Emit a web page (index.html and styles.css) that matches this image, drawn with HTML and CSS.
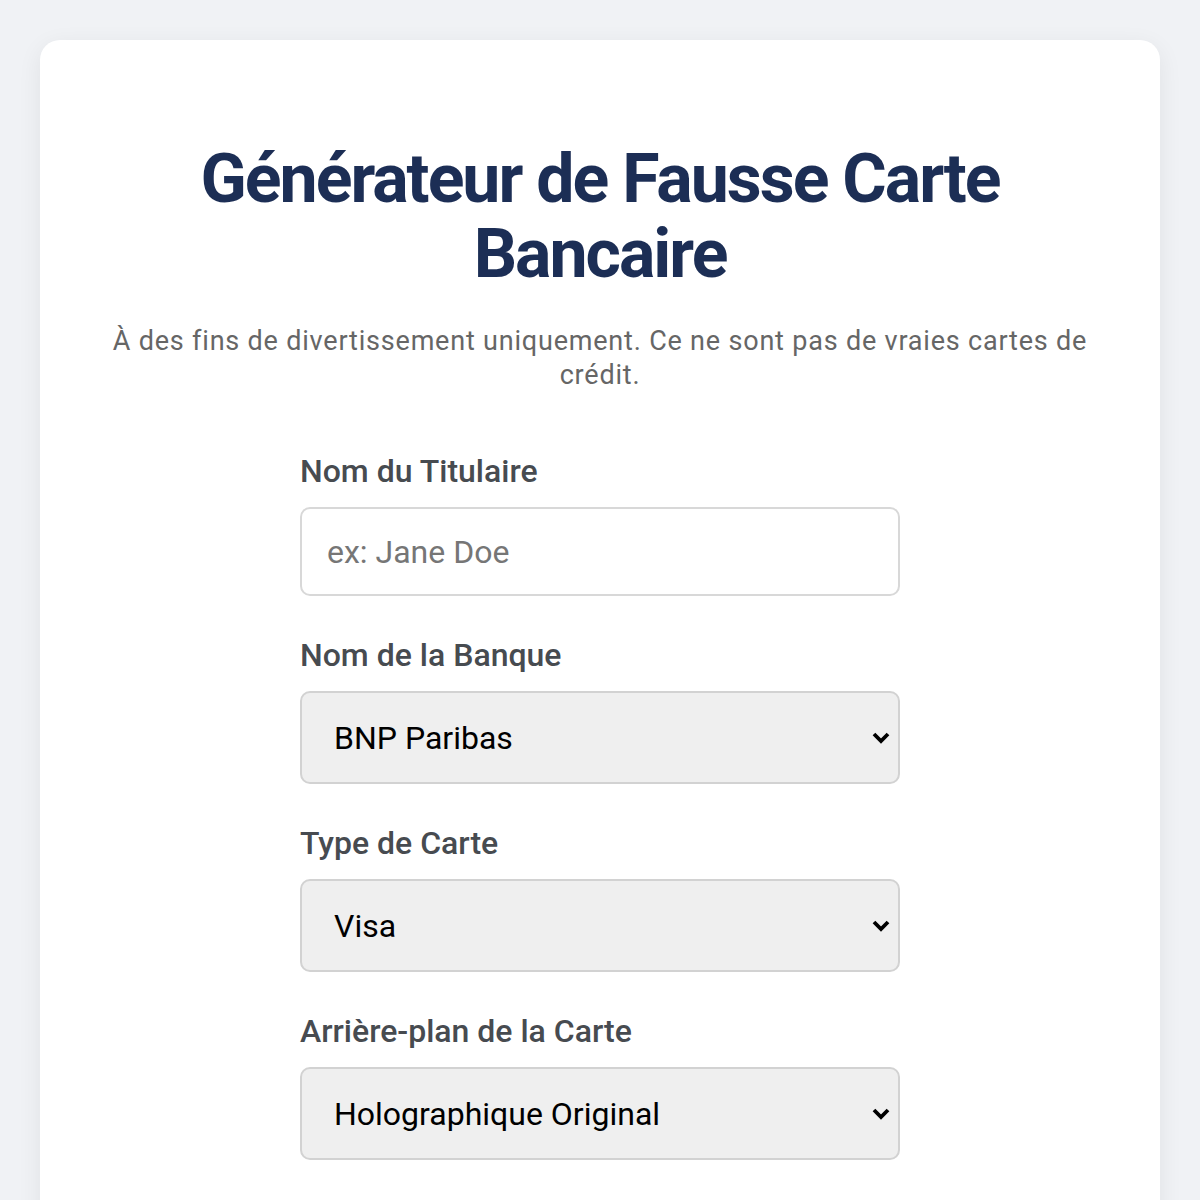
FILE: index.html
```html
<!DOCTYPE html>
<html lang="fr">
<head>
<meta charset="utf-8">
<title>Générateur de Fausse Carte Bancaire</title>
<link rel="stylesheet" href="styles.css">
</head>
<body>
<main class="card">
  <h1 class="title">Générateur de Fausse Carte Bancaire</h1>
  <p class="subtitle">À des fins de divertissement uniquement. Ce ne sont pas de vraies cartes de crédit.</p>
  <form class="form">
    <div class="field">
      <label class="label" for="holder">Nom du Titulaire</label>
      <input class="input" id="holder" type="text" placeholder="ex: Jane Doe">
    </div>
    <div class="field">
      <label class="label" for="bank">Nom de la Banque</label>
      <select class="select" id="bank">
        <option>BNP Paribas</option>
      </select>
    </div>
    <div class="field">
      <label class="label" for="type">Type de Carte</label>
      <select class="select" id="type">
        <option>Visa</option>
      </select>
    </div>
    <div class="field">
      <label class="label" for="bg">Arrière-plan de la Carte</label>
      <select class="select" id="bg">
        <option>Holographique Original</option>
      </select>
    </div>
  </form>
</main>
</body>
</html>
```

FILE: styles.css
```css
html, body {
  margin: 0;
  padding: 0;
}
body {
  background: #f0f2f5;
  font-family: Roboto, "Liberation Sans", sans-serif;
  padding: 40px 40px 0;
}
.card {
  background: #ffffff;
  border-radius: 20px;
  box-shadow: 0 6px 24px rgba(0, 0, 0, 0.07);
  padding: 102px 60px 60px;
  min-height: 1200px;
  box-sizing: border-box;
}
.title {
  margin: 0;
  text-align: center;
  color: #1c2e55;
  font-size: 68px;
  font-weight: 700;
  line-height: 75px;
  letter-spacing: -2px;
}
.subtitle {
  margin: 32px 0 0;
  text-align: center;
  color: #666666;
  font-size: 27px;
  line-height: 34px;
  letter-spacing: 0.8px;
}
.form {
  width: 600px;
  margin: 60px auto 0;
  display: flex;
  flex-direction: column;
  gap: 40px;
}
.field {
  display: flex;
  flex-direction: column;
  gap: 17px;
}
.label {
  color: #474b50;
  font-size: 32px;
  font-weight: 500;
  line-height: 38px;
}
.input, .select {
  box-sizing: border-box;
  width: 100%;
  margin: 0;
  font-family: Roboto, "Liberation Sans", sans-serif;
  font-size: 32px;
  border: 2px solid #d8d8d8;
  border-radius: 10px;
  outline: none;
}
.input {
  height: 89px;
  padding: 0 25px;
  background: #ffffff;
  color: #222;
}
.input::placeholder {
  color: #767676;
}
.select {
  -webkit-appearance: none;
  appearance: none;
  height: 93px;
  padding: 0 40px 0 32px;
  color: #000000;
  border-color: #d2d2d2;
  background-color: #efefef;
  background-image: url("data:image/svg+xml,%3Csvg xmlns='http://www.w3.org/2000/svg' width='18' height='12' viewBox='0 0 18 12'%3E%3Cpolyline points='2,2 9,9 16,2' fill='none' stroke='%23000' stroke-width='3.8'/%3E%3C/svg%3E");
  background-repeat: no-repeat;
  background-position: right 8px center;
  background-size: 18px 12px;
}
```
